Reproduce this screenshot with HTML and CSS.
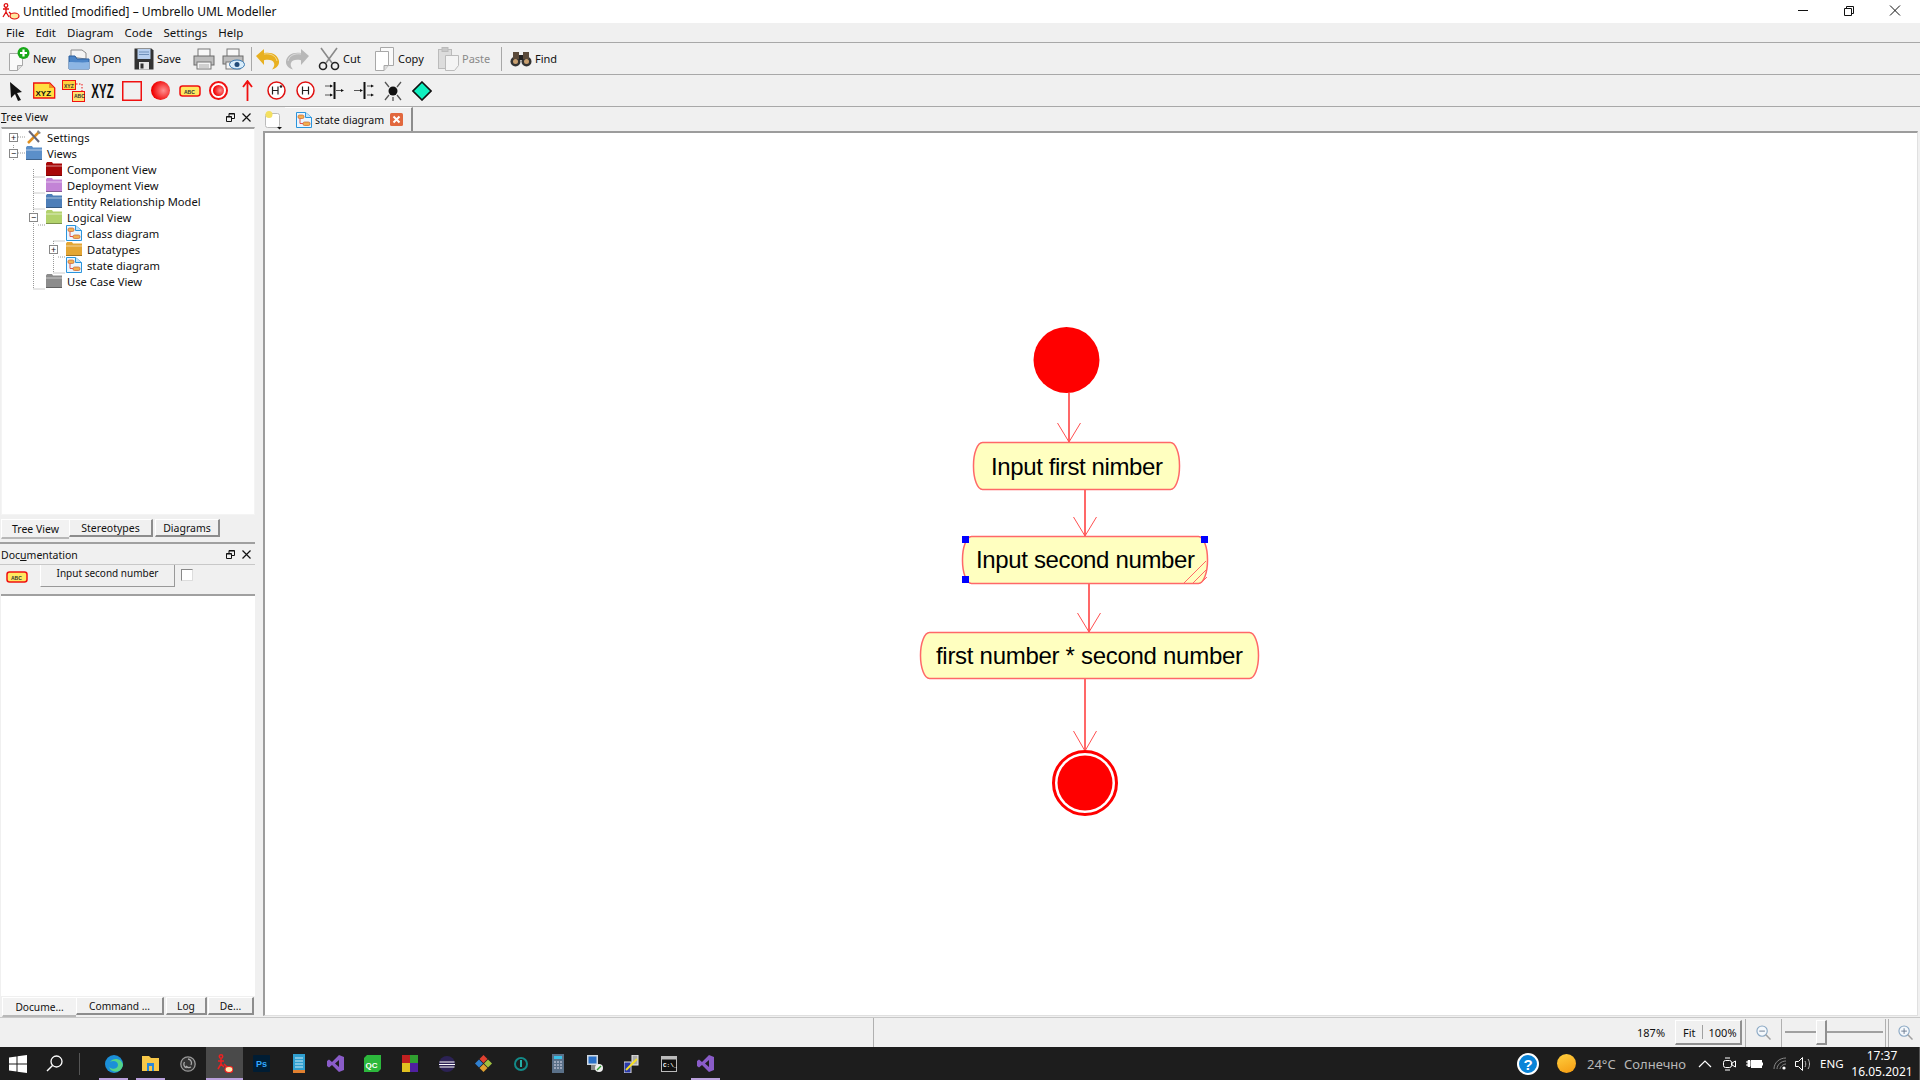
FILE: index.html
```html
<!DOCTYPE html>
<html lang="en">
<head>
  <meta charset="UTF-8">
  <title>Untitled [modified] – Umbrello UML Modeller</title>
  <link rel="stylesheet" href="styles.css">
</head>
<body>

<svg class="sprite" width="0" height="0">
  <symbol id="umbrello" viewBox="0 0 18 18">
    <g fill="none" stroke="#e01010" stroke-width="1.3"><circle cx="4" cy="2.5" r="1.8"/><path d="M4 4v5M1 6h6M4 9l-3 5M4 9l3 5M7 9l3 3"/></g>
    <ellipse cx="12.5" cy="13" rx="4.5" ry="3" fill="#ffe9a0" stroke="#e01010" stroke-width="1.2"/>
  </symbol>
  <symbol id="folder" viewBox="0 0 16 16">
    <path d="M0 2.5 1 1h5l1 1.5h9V15H0z" fill="currentColor"/>
    <path d="M0 5h16" stroke="#fff" stroke-opacity=".55"/>
    <path d="M0 14.5h16" stroke="#000" stroke-opacity=".3"/>
  </symbol>
  <symbol id="diagram" viewBox="0 0 16 16">
    <path d="M.5.5h9l6 5v10H.5z" fill="#eaf6ff" stroke="#2a94dc"/>
    <path d="M9.500.5v5h6" fill="#bfe3fb" stroke="#2a94dc"/>
    <rect x="2" y="3" width="6" height="3.500" rx="1.500" fill="#f2b050" stroke="#c86030" stroke-width=".7"/>
    <rect x="7" y="10" width="7" height="3.500" rx="1.500" fill="#f2b050" stroke="#c86030" stroke-width=".7"/>
    <path d="M4 6.500v5h3" fill="none" stroke="#e05050"/>
  </symbol>
  <symbol id="i-new" viewBox="0 0 22 24">
    <path d="M1.500 6.500h13v12l-5 5h-8z" fill="#fafafa" stroke="#a8a8a8"/><path d="M14.500 18.500h-5v5" fill="#ddd" stroke="#a8a8a8"/>
    <circle cx="15.500" cy="6" r="6" fill="#18a818"/><path d="M15.500 2.500v7M12 6h7" stroke="#fff" stroke-width="2.200"/>
  </symbol>
  <symbol id="i-open" viewBox="0 0 22 24">
    <path d="M3 10V3h11l4 3v6z" fill="#f4f4f4" stroke="#8a8a8a"/>
    <path d="M1 9h6l2 3h12v10H1z" fill="#4d86c8" stroke="#2b5f9e"/><path d="M1 15c6 0 14 1 20 0v7H1z" fill="#8db6e4"/>
  </symbol>
  <symbol id="i-save" viewBox="0 0 20 22">
    <path d="M.5.500h17l2 2v19H.500z" fill="#333"/><rect x="3.500" y="1" width="13" height="10" fill="#b8cfee"/>
    <path d="M5 4h10M5 6.500h10" stroke="#6f8fb8"/><rect x="5" y="14" width="10" height="7.500" fill="#e8e8e8"/><rect x="6.500" y="15.500" width="3" height="5" fill="#333"/>
  </symbol>
  <symbol id="i-print" viewBox="0 0 22 22">
    <rect x="5" y="1" width="12" height="8" fill="#f8f8f8" stroke="#777"/><rect x="1" y="8" width="20" height="9" fill="#bdbdbd" stroke="#6a6a6a"/>
    <rect x="4" y="14" width="14" height="7" fill="#f4f4f4" stroke="#777"/><path d="M6 17h10M6 19h10" stroke="#aaa"/>
  </symbol>
  <symbol id="i-preview" viewBox="0 0 23 22">
    <rect x="5" y="1" width="12" height="8" fill="#f8f8f8" stroke="#777"/><rect x="1" y="8" width="20" height="8" fill="#bdbdbd" stroke="#6a6a6a"/>
    <rect x="4" y="14" width="14" height="7" fill="#f4f4f4" stroke="#777"/>
    <ellipse cx="15" cy="16.500" rx="7.500" ry="4.500" fill="#d8ecfa" stroke="#3878b0"/><circle cx="15" cy="16.500" r="2.500" fill="#204a78"/>
  </symbol>
  <symbol id="i-undo" viewBox="0 0 23 22">
    <path d="M0 8 8 1v4c8-1.500 14 2 15 8 .5 4-2.500 7.500-7 8.500 1.800-2 2.800-4.500 2-6.500-1-3-5-4-10-2.800V17z" fill="currentColor"/>
    <path d="M8 6c7-1 12 2 13 7" fill="none" stroke="#fff" stroke-opacity=".5"/>
  </symbol>
  <symbol id="i-cut" viewBox="0 0 22 24">
    <path d="M3 1l11 15M19 1 8 16" stroke="#8a8a8a" stroke-width="1.600" fill="none"/>
    <circle cx="5" cy="19" r="3.500" fill="none" stroke="#222" stroke-width="1.600"/><circle cx="17" cy="19" r="3.500" fill="none" stroke="#222" stroke-width="1.600"/>
  </symbol>
  <symbol id="i-copy" viewBox="0 0 20 24">
    <path d="M5.500.5h13v18h-13z" fill="#fafafa" stroke="#a8a8a8"/><path d="M.5 4.500h13v14l-4.500 5H.500z" fill="#fff" stroke="#a8a8a8"/><path d="M13.500 18.500h-4.500v5" fill="#ddd" stroke="#a8a8a8"/>
  </symbol>
  <symbol id="i-paste" viewBox="0 0 21 24">
    <rect x=".5" y="2.500" width="13" height="19" fill="#dcdcdc" stroke="#bbb"/><rect x="4" y=".5" width="6" height="4" fill="#c8c8c8" stroke="#bbb"/>
    <path d="M7.500 8.500h13v10l-4 5h-9z" fill="#f4f4f4" stroke="#bbb"/>
  </symbol>
  <symbol id="i-find" viewBox="0 0 22 18">
    <circle cx="5.500" cy="11.500" r="5" fill="#333"/><circle cx="16.500" cy="11.500" r="5" fill="#333"/><rect x="3" y="2" width="6" height="7" fill="#5a4a3a"/><rect x="13" y="2" width="6" height="7" fill="#5a4a3a"/>
    <rect x="9" y="5" width="4" height="5" fill="#222"/><circle cx="5.500" cy="11.500" r="2.500" fill="#c9a070"/><circle cx="16.500" cy="11.500" r="2.500" fill="#c9a070"/>
  </symbol>
  <symbol id="i-abc" viewBox="0 0 22 12">
    <rect x="1" y="1" width="20" height="10" rx="2.500" fill="#ffe860" stroke="#f01010" stroke-width="1.500"/>
  </symbol>
  <symbol id="i-zoom" viewBox="0 0 16 16">
    <circle cx="6.500" cy="6.500" r="5.500" fill="#f4f8fc" stroke="#8aa8c4" stroke-width="1.200"/><path d="M10.500 10.500l5 5" stroke="#a0a0a0" stroke-width="1.600"/><path d="M3.500 6.500h6" stroke="#6a7a90"/>
  </symbol>
  <symbol id="i-zoom-in" viewBox="0 0 16 16">
    <circle cx="6.500" cy="6.500" r="5.500" fill="#f4f8fc" stroke="#8aa8c4" stroke-width="1.200"/><path d="M10.500 10.500l5 5" stroke="#a0a0a0" stroke-width="1.600"/><path d="M3.500 6.500h6M6.500 3.500v6" stroke="#6a7a90"/>
  </symbol>
  <symbol id="i-float" viewBox="0 0 9 9">
    <path d="M.5 3.500h5v5h-5zM3 3V.5h5.500v5H6" fill="none" stroke="#111"/><path d="M.5 4h5M3 1h5.500" stroke="#111"/>
  </symbol>
  <symbol id="i-close" viewBox="0 0 9 9">
    <path d="M.5.500l8 8M8.500.500l-8 8" stroke="#111" stroke-width="1.200"/>
  </symbol>
</svg>

<header class="titlebar">
  <svg class="app-icon"><use href="#umbrello"/></svg>
  <span class="title-text">Untitled [modified] – Umbrello UML Modeller</span>
  <div class="win-buttons">
    <svg width="46" height="23" viewBox="0 0 46 23"><path d="M18 10.500h10" stroke="#111"/></svg>
    <svg width="46" height="23" viewBox="0 0 46 23"><path d="M18.500 8.500h7v7h-7zM20.500 8.500v-2h7v7h-2" fill="none" stroke="#111"/></svg>
    <svg width="46" height="23" viewBox="0 0 46 23"><path d="M18 5.500l10 10M28 5.500l-10 10" stroke="#111"/></svg>
  </div>
</header>

<nav class="menubar">
  <span>File</span><span>Edit</span><span>Diagram</span><span>Code</span><span>Settings</span><span>Help</span>
</nav>

<div class="toolbar main-tools">
  <span class="tool tool-new"><svg width="22" height="24"><use href="#i-new"/></svg>New</span>
  <span class="tool tool-open"><svg width="22" height="24"><use href="#i-open"/></svg>Open</span>
  <span class="tool tool-save"><svg width="20" height="22"><use href="#i-save"/></svg>Save</span>
  <span class="tool tool-print"><svg width="22" height="22"><use href="#i-print"/></svg></span>
  <span class="tool tool-preview"><svg width="23" height="22"><use href="#i-preview"/></svg></span>
  <span class="tool-sep"></span>
  <span class="tool tool-undo undo"><svg width="23" height="22"><use href="#i-undo"/></svg></span>
  <span class="tool tool-redo redo"><svg width="23" height="22"><use href="#i-undo"/></svg></span>
  <span class="tool tool-cut"><svg width="22" height="24"><use href="#i-cut"/></svg>Cut</span>
  <span class="tool tool-copy"><svg width="20" height="24"><use href="#i-copy"/></svg>Copy</span>
  <span class="tool tool-paste disabled"><svg width="21" height="24"><use href="#i-paste"/></svg>Paste</span>
  <span class="tool-sep sep-find"></span>
  <span class="tool tool-find"><svg width="22" height="18"><use href="#i-find"/></svg>Find</span>
</div>

<div class="toolbar uml-tools">
  <span class="uml"><svg width="14" height="20" viewBox="0 0 14 20"><path d="M1 1l12 10-5 1 4 7-3 1-3-7-4 4z" fill="#111"/></svg></span>
  <span class="uml"><svg width="23" height="17" viewBox="0 0 23 17"><path d="M.7 1h16l5 5v10H.700z" fill="#ffe040" stroke="#f01010" stroke-width="1.300"/><path d="M16 1l5 5h-5z" fill="#f09020"/><text class="xyz-small" x="2.500" y="14">XYZ</text></svg></span>
  <span class="uml"><svg width="23" height="22" viewBox="0 0 23 22"><rect x=".5" y=".5" width="13" height="9" fill="#ffd040" stroke="#f01010"/><rect x="10.500" y="11.500" width="12" height="10" fill="#ffe070" stroke="#f01010"/><path d="M14 4h6v7" fill="none" stroke="#f01010" stroke-dasharray="1.500 1.500"/><text class="xyz-tiny" x="2" y="7.500">XYZ</text><text class="xyz-tiny" x="12" y="17.500">ABC</text></svg></span>
  <span class="uml uml-xyz">XYZ</span>
  <span class="uml"><svg width="20" height="20" viewBox="0 0 20 20"><rect x=".75" y=".75" width="18.500" height="18.500" fill="none" stroke="#f01010" stroke-width="1.500"/></svg></span>
  <span class="uml"><svg width="19" height="19" viewBox="0 0 19 19"><defs><radialGradient id="ball" cx=".65" cy=".5" r=".6"><stop offset="0" stop-color="#ff9090"/><stop offset="1" stop-color="#f00000"/></radialGradient></defs><circle cx="9.500" cy="9.500" r="9.500" fill="url(#ball)"/></svg></span>
  <span class="uml"><svg width="22" height="12" viewBox="0 0 22 12"><use href="#i-abc"/><text class="xyz-tiny" x="5" y="8.500">ABC</text></svg></span>
  <span class="uml"><svg width="19" height="19" viewBox="0 0 19 19"><circle cx="9.500" cy="9.500" r="8.500" fill="#fff" stroke="#f01010" stroke-width="2"/><circle cx="9.500" cy="9.500" r="5.500" fill="url(#ball)"/></svg></span>
  <span class="uml"><svg width="11" height="21" viewBox="0 0 11 21"><path d="M5.500 21V2M1 7l4.500-6L10 7" fill="none" stroke="#f01010" stroke-width="1.800"/></svg></span>
  <span class="uml"><svg width="19" height="19" viewBox="0 0 19 19"><circle cx="9.500" cy="9.500" r="8.500" fill="#fff" stroke="#e01010" stroke-width="1.500"/><path d="M5.500 5.500v8M11 5.500v8M5.500 9.500H11" stroke="#222" stroke-width="1.200"/><circle cx="14" cy="5.500" r="1.300" fill="#222"/></svg></span>
  <span class="uml"><svg width="19" height="19" viewBox="0 0 19 19"><circle cx="9.500" cy="9.500" r="8.500" fill="#fff" stroke="#e01010" stroke-width="1.500"/><path d="M6.500 5.500v8M12.500 5.500v8M6.500 9.500h6" stroke="#222" stroke-width="1.200"/></svg></span>
  <span class="uml"><svg width="20" height="17" viewBox="0 0 20 17"><path d="M9.500 0v17" stroke="#111" stroke-width="2"/><path d="M0 4h7M0 13h7M11 8.500h6" stroke="#555"/><path d="M5 2.500 8 4 5 5.500zM5 11.500 8 13l-3 1.500zM16 7l3 1.500-3 1.500z" fill="#111"/></svg></span>
  <span class="uml"><svg width="20" height="17" viewBox="0 0 20 17"><path d="M10.500 0v17" stroke="#111" stroke-width="2"/><path d="M0 8.500h7M13 4h5M13 13h5" stroke="#555"/><path d="M6 7l3 1.500L6 10zM17 2.500 20 4l-3 1.500zM17 11.500l3 1.500-3 1.500z" fill="#111"/></svg></span>
  <span class="uml"><svg width="20" height="20" viewBox="0 0 20 20"><circle cx="10" cy="10" r="4.500" fill="#111"/><path d="M2 1l4 5M18 1l-4 5M2 19l4-5M18 19l-4-5M10 16v4" stroke="#555" stroke-width="1.300"/></svg></span>
  <span class="uml"><svg width="20" height="20" viewBox="0 0 20 20"><path d="M10 1l9 9-9 9-9-9z" fill="#10f0c0" stroke="#111" stroke-width="1.600"/></svg></span>
</div>

<div class="workspace">
  <aside class="dock">
    <div class="dock-title">
      <span><u>T</u>ree View</span>
      <span class="dock-btns">
        <svg width="9" height="9"><use href="#i-float"/></svg>
        <svg width="9" height="9"><use href="#i-close"/></svg>
      </span>
    </div>
    <div class="tree-box">
      <svg class="tree-lines" width="100" height="190" viewBox="0 0 100 190">
        <path d="M11.500 16v16M31.500 40v120M31.500 48h12M31.500 64h12M31.500 80h12M31.500 160h12M51.500 112v32M51.500 112h12M51.500 144h12M16 8h8M16 24h8M36 96h8M56 128h8" fill="none" stroke="#999" stroke-dasharray="1 1"/>
      </svg>
      <ul class="tree">
        <li class="lvl0"><span class="exp">+</span><svg class="tree-icon" viewBox="0 0 16 16"><path d="M2 14 13 3" stroke="#e09020" stroke-width="2.500"/><path d="M3 2l10 11" stroke="#667" stroke-width="2"/><path d="M12 1l3 3-2 1-2-2z" fill="#888"/></svg>Settings</li>
        <li class="lvl0"><span class="exp">−</span><svg class="tree-icon fld-blue"><use href="#folder"/></svg>Views</li>
        <li class="lvl1"><span class="noexp"></span><svg class="tree-icon fld-red"><use href="#folder"/></svg>Component View</li>
        <li class="lvl1"><span class="noexp"></span><svg class="tree-icon fld-purple"><use href="#folder"/></svg>Deployment View</li>
        <li class="lvl1"><span class="noexp"></span><svg class="tree-icon fld-navy"><use href="#folder"/></svg>Entity Relationship Model</li>
        <li class="lvl1"><span class="exp">−</span><svg class="tree-icon fld-green"><use href="#folder"/></svg>Logical View</li>
        <li class="lvl2"><span class="noexp"></span><svg class="tree-icon"><use href="#diagram"/></svg>class diagram</li>
        <li class="lvl2"><span class="exp">+</span><svg class="tree-icon fld-orange"><use href="#folder"/></svg>Datatypes</li>
        <li class="lvl2"><span class="noexp"></span><svg class="tree-icon"><use href="#diagram"/></svg>state diagram</li>
        <li class="lvl1"><span class="noexp"></span><svg class="tree-icon fld-grey"><use href="#folder"/></svg>Use Case View</li>
      </ul>
    </div>
    <div class="dock-tabs tabs-top">
      <span class="dtab active t-tree">Tree View</span>
      <span class="dtab t-stereo">Stereotypes</span>
      <span class="dtab t-diag">Diagrams</span>
    </div>
    <div class="dock-title doc-title">
      <span>Doc<u>u</u>mentation</span>
      <span class="dock-btns">
        <svg width="9" height="9"><use href="#i-float"/></svg>
        <svg width="9" height="9"><use href="#i-close"/></svg>
      </span>
    </div>
    <div class="doc-head">
      <svg class="doc-icon" width="22" height="12" viewBox="0 0 22 12"><use href="#i-abc"/><text class="xyz-tiny" x="5" y="8.500">ABC</text></svg>
      <span class="doc-name">Input second number</span>
      <span class="doc-check"></span>
    </div>
    <div class="doc-box"></div>
    <div class="dock-tabs tabs-bottom">
      <span class="dtab active t-docu">Docume...</span>
      <span class="dtab t-cmd">Command ...</span>
      <span class="dtab t-log">Log</span>
      <span class="dtab t-de">De...</span>
    </div>
  </aside>

  <section class="editor">
    <div class="tabbar">
      <span class="corner"><svg width="18" height="20" viewBox="0 0 18 20"><rect x=".5" y="3.500" width="14" height="14" rx="2" fill="#fff" stroke="#bbb"/><circle cx="4" cy="4.500" r="3.500" fill="#f4e060"/><path d="M12 17h5l-2.500 2.500z" fill="#111"/></svg></span>
      <span class="doc-tab">
        <svg class="tree-icon"><use href="#diagram"/></svg>state diagram
        <svg class="tab-close" width="13" height="13" viewBox="0 0 13 13"><rect width="13" height="13" rx="1.500" fill="#e2683e"/><path d="M3.500 3.500l6 6M9.500 3.500l-6 6" stroke="#fff" stroke-width="2"/></svg>
      </span>
    </div>
    <div class="canvas">
      <svg class="diagram" width="1652" height="881" viewBox="265 133 1652 881">
        <circle class="solid" cx="1066.500" cy="360" r="33"/>

        <path class="edge" d="M1069 393v49"/>
        <path class="head" d="M1057.500 423l11.500 19 11.500-19"/>
        <rect class="state" x="973.500" y="442.500" width="206" height="47" rx="9" ry="23"/>
        <text class="state-text" x="991" y="475" textLength="172">Input first nimber</text>

        <path class="edge" d="M1085 490v46"/>
        <path class="head" d="M1073.500 517l11.500 19 11.500-19"/>
        <rect class="state" x="962.500" y="536.500" width="245" height="47" rx="9" ry="23"/>
        <text class="state-text" x="976" y="568" textLength="219">Input second number</text>
        <path class="hatch" d="M1184 583l22-22M1193 583l14-14M1201 583l6-6"/>
        <rect class="handle" x="962" y="536" width="7" height="7"/>
        <rect class="handle" x="1201" y="536" width="7" height="7"/>
        <rect class="handle" x="962" y="576" width="7" height="7"/>

        <path class="edge" d="M1089 584v48"/>
        <path class="head" d="M1077.500 613l11.500 19 11.500-19"/>
        <rect class="state" x="920.500" y="632.500" width="338" height="46" rx="9" ry="23"/>
        <text class="state-text" x="936" y="664" textLength="307">first number * second number</text>

        <path class="edge" d="M1085 679v72"/>
        <path class="head" d="M1073.500 731l11.500 20 11.500-20"/>
        <circle class="end-ring" cx="1085" cy="783" r="31.500"/>
        <circle class="solid" cx="1085" cy="783" r="27.500"/>
      </svg>
    </div>
  </section>
</div>

<div class="statusbar">
  <div class="status-msg"></div>
  <span class="zoom-pct">187%</span>
  <span class="zoom-btns"><span>Fit</span><i></i><span>100%</span></span>
  <span class="zoom-cell zoom-out"><svg width="15" height="15"><use href="#i-zoom"/></svg></span>
  <span class="zoom-slider"><b></b></span>
  <span class="zoom-cell zoom-in"><svg width="15" height="15"><use href="#i-zoom-in"/></svg></span>
</div>

<footer class="taskbar">
  <svg class="start" width="18" height="18" viewBox="0 0 18 18"><path d="M0 2.500 7.500 1.500v7H0zM8.500 1.300 18 0v8.500H8.500zM0 9.500h7.500v7L0 15.500zM8.500 9.500H18V18l-9.500-1.300z" fill="#fff"/></svg>
  <svg class="search" width="17" height="17" viewBox="0 0 17 17"><circle cx="10.500" cy="6.500" r="5.500" fill="none" stroke="#fff" stroke-width="1.300"/><path d="M6.500 10.500 1 16" stroke="#fff" stroke-width="1.500"/></svg>
  <span class="task-sep"></span>
  <div class="task-apps">
    <span class="app on"><svg width="18" height="18" viewBox="0 0 18 18"><circle cx="9" cy="9" r="9" fill="#1b8fd8"/><path d="M18 10c-1-7-10-8-13-3 3-2 8-1 8 3 0 4-6 5-9 2 2 6 12 7 14-2z" fill="#54d48a"/></svg></span>
    <span class="app on"><svg width="17" height="15" viewBox="0 0 17 15"><path d="M0 0h7l2 2h8v13H0z" fill="#f8c848"/><rect x="5" y="7" width="7" height="8" fill="#2a88d8"/><rect x="7" y="10" width="3" height="5" fill="#f8c848"/></svg></span>
    <span class="app"><svg width="16" height="16" viewBox="0 0 16 16"><circle cx="8" cy="8" r="7.200" fill="#333" stroke="#999" stroke-width="1.300"/><path d="M8 3a4 4 0 0 1 3 6M4.500 6a4 4 0 0 0 2 6M11 11a4 4 0 0 1-5-1" fill="none" stroke="#aaa" stroke-width="1.300"/></svg></span>
    <span class="app on active"><svg width="16" height="20" viewBox="0 0 16 20"><g fill="none" stroke="#f02020" stroke-width="1.500"><circle cx="4" cy="2.500" r="1.700"/><path d="M4 4.500v6M1 7h6M4 10l-3 5M4 10l3 3M7 10l3 3"/></g><ellipse cx="12" cy="15.500" rx="4" ry="3" fill="#ffe8b0" stroke="#f02020" stroke-width="1.200"/></svg></span>
    <span class="app"><svg width="17" height="17" viewBox="0 0 17 17"><rect width="17" height="17" rx="1" fill="#001d34"/><text class="ps" x="3" y="12">Ps</text></svg></span>
    <span class="app"><svg width="12" height="19" viewBox="0 0 12 19"><rect width="12" height="19" fill="#2f9fd0"/><path d="M2 4h8M2 7h8M2 10h8M2 13h8" stroke="#cdeaf6"/><rect y="16" width="12" height="3" fill="#e08030"/></svg></span>
    <span class="app"><svg width="17" height="17" viewBox="0 0 17 17"><path d="M12 0l5 2v13l-5 2L5 10l-3 2.500L0 11V6l2-1.500L5 7zM12 5 8 8.500l4 3.500z" fill="#8a5cc8"/></svg></span>
    <span class="app"><svg width="17" height="17" viewBox="0 0 17 17"><path d="M3 0h14v14l-3 3H0V3z" fill="#2cb83c"/><text class="qc" x="1.500" y="12.500">QC</text></svg></span>
    <span class="app"><svg width="16" height="17" viewBox="0 0 16 17"><rect width="8" height="8" fill="#c02020"/><rect x="8" width="8" height="8" fill="#30a030"/><rect y="8" width="8" height="9" fill="#e0c020"/><rect x="8" y="8" width="8" height="9" fill="#5020a0"/></svg></span>
    <span class="app"><svg width="16" height="16" viewBox="0 0 16 16"><circle cx="8" cy="8" r="8" fill="#2c2255"/><path d="M.5 6h15M0 8.500h16M.5 11h15" stroke="#fff" stroke-width="1"/></svg></span>
    <span class="app"><svg width="17" height="17" viewBox="0 0 17 17"><path d="M8.500 0l4 4-4 4-4-4z" fill="#e04030"/><path d="M13 4.500l4 4-4 4-4-4z" fill="#a0c040"/><path d="M4 4.500l4 4-4 4-4-4z" fill="#3080d0"/><path d="M8.500 9l4 4-4 4-4-4z" fill="#e0a030"/></svg></span>
    <span class="app"><svg width="14" height="14" viewBox="0 0 14 14"><circle cx="7" cy="7" r="6" fill="none" stroke="#138a88" stroke-width="2"/><path d="M7 3v7" stroke="#26b0a8" stroke-width="2"/></svg></span>
    <span class="app"><svg width="12" height="19" viewBox="0 0 12 19"><rect width="12" height="19" fill="#5a7088"/><rect x="2" y="2" width="8" height="3" fill="#3ac0e8"/><path d="M2 8h2M5 8h2M8 8h2M2 11h2M5 11h2M8 11h2M2 14h2M5 14h2M8 14h2" stroke="#dde"/></svg></span>
    <span class="app"><svg width="16" height="17" viewBox="0 0 16 17"><rect width="11" height="10" fill="#d0d8e0"/><rect x="1.500" y="1.500" width="8" height="7" fill="#2a70c8"/><rect x="4" y="10" width="5" height="5" fill="#888"/><circle cx="12" cy="13" r="4" fill="#eee"/><path d="M10 15l4-4" stroke="#30a030" stroke-width="1.500"/></svg></span>
    <span class="app"><svg width="15" height="18" viewBox="0 0 15 18"><rect x="0" y="7" width="7" height="11" fill="#2a3aa8" stroke="#ddd"/><rect x="8" y="0" width="6" height="10" fill="#aaa" stroke="#eee"/><path d="M2 15 13 4" stroke="#f8e020" stroke-width="1.800"/></svg></span>
    <span class="app"><svg width="16" height="16" viewBox="0 0 16 16"><rect x=".5" y=".5" width="15" height="15" fill="#111" stroke="#bbb"/><rect x="1" y="1" width="14" height="2.500" fill="#bbb"/><text class="cmd" x="2" y="11">C:\_</text></svg></span>
    <span class="app on"><svg width="17" height="17" viewBox="0 0 17 17"><path d="M12 0l5 2v13l-5 2L5 10l-3 2.500L0 11V6l2-1.500L5 7zM12 5 8 8.500l4 3.500z" fill="#8a5cc8"/></svg></span>
  </div>
  <div class="tray">
    <svg class="tray-help" width="22" height="22" viewBox="0 0 22 22"><circle cx="11" cy="11" r="10" fill="#0a84d8" stroke="#fff" stroke-width="2"/><text class="help-q" x="11" y="16.500">?</text></svg>
    <span class="sun"></span>
    <span class="weather temp">24°C</span>
    <span class="weather cond">Солнечно</span>
    <svg class="tray-i chevron" width="14" height="8" viewBox="0 0 14 8"><path d="M1 7l6-6 6 6" fill="none" stroke="#fff" stroke-width="1.200"/></svg>
    <svg class="tray-i cam" width="13" height="16" viewBox="0 0 13 16"><rect x=".5" y="4.500" width="8" height="7" rx="2" fill="none" stroke="#fff"/><path d="M9 7l3.500-2v6L9 9zM2 2h5M2 14h5" fill="none" stroke="#fff"/></svg>
    <svg class="tray-i batt" width="17" height="10" viewBox="0 0 17 10"><path d="M0 3h2M0 6h2M2 1.500h2v6H2z" stroke="#fff" fill="#fff"/><rect x="5.500" y="1.500" width="10" height="7" fill="#fff" stroke="#fff"/><rect x="16" y="3.500" width="1" height="3" fill="#fff"/></svg>
    <svg class="tray-i wifi" width="14" height="13" viewBox="0 0 14 13"><path d="M1 12C1 6 6 1 13 1M4 12c0-4 4-8 9-8M7 12c0-2 3-5 6-5" fill="none" stroke="#888"/><circle cx="11" cy="11" r="1.600" fill="#fff"/></svg>
    <svg class="tray-i vol" width="17" height="14" viewBox="0 0 17 14"><path d="M.5 4.500h3l4-4v13l-4-4h-3z" fill="none" stroke="#fff"/><path d="M10 4c1 2 1 4 0 6M13 2c2 3 2 7 0 10" fill="none" stroke="#bbb"/></svg>
    <span class="lang">ENG</span>
    <span class="clock">17:37<br>16.05.2021</span>
  </div>
</footer>

</body>
</html>
```

FILE: styles.css
```css
* { box-sizing: border-box; }
html, body { margin: 0; padding: 0; }
body { width: 1920px; height: 1080px; overflow: hidden; display: flex; flex-direction: column; background-color: #f0f0f0; color: #111; font-family: "Noto Sans", "Liberation Sans", sans-serif; font-size: 11.5px; }
.sprite { position: absolute; }

.titlebar { height: 23px; background-color: #fff; display: flex; align-items: center; padding-left: 2px; font-size: 12px; }
.app-icon { width: 18px; height: 18px; margin-right: 3px; }
.win-buttons { margin-left: auto; display: flex; padding-right: 2px; }
.win-buttons svg { display: block; }

.menubar { height: 20px; display: flex; align-items: center; padding-left: 6px; border-bottom: 1px solid #a8a8a8; font-size: 11.5px; }
.menubar span { margin-right: 11px; }

.toolbar { height: 32px; display: flex; align-items: center; border-bottom: 1px solid #a8a8a8; }
.tool { display: flex; align-items: center; font-size: 11px; flex: none; }
.tool svg { margin-right: 3px; }
.main-tools { padding-left: 8px; }
.tool-new { width: 60px; }
.tool-open { width: 66px; }
.tool-save { width: 59px; }
.tool-print { width: 29px; }
.tool-preview { width: 29px; }
.tool-sep { width: 1px; height: 24px; background-color: #a8a8a8; margin-right: 4px; flex: none; }
.tool-undo { width: 30px; }
.tool-redo { width: 32px; }
.tool-cut { width: 57px; }
.tool-copy { width: 63px; }
.tool-paste { width: 63px; }
.sep-find { margin-right: 8px; }
.undo { color: #e8b020; }
.redo { color: #b8b8b8; }
.redo svg { transform: scaleX(-1); }
.disabled { color: #8a8a8a; }

.uml-tools { padding-left: 1px; }
.uml { width: 29.05px; display: flex; justify-content: center; align-items: center; flex: none; }
.uml-xyz { font-family: "Liberation Sans", sans-serif; font-size: 21px; transform: scaleX(.55); color: #111; font-weight: 700; }
.xyz-small { font: 700 8px "Liberation Sans", sans-serif; fill: #111; }
.xyz-tiny { font: 700 5px "Liberation Sans", sans-serif; fill: #333; }

.workspace { flex: 1; display: flex; min-height: 0; }
.dock { width: 255px; margin-right: 8px; display: flex; flex-direction: column; }
.dock-title { height: 20px; padding: 0 4px 0 1px; display: flex; justify-content: space-between; align-items: center; font-size: 10.5px; }
.doc-title { padding-top: 1px; }
.dock-btns { display: flex; gap: 7px; align-items: center; }
.tree-box { height: 388px; position: relative; background-color: #fff; border: 1px solid #f4f4f4; border-top: 2px solid #a0a0a0; margin-left: 1px; }
.tree-lines { position: absolute; left: 0; top: 0; }
.tree { list-style: none; margin: 0; padding: 0; position: relative; }
.tree li { height: 16px; display: flex; align-items: center; white-space: nowrap; font-size: 11.2px; }
.lvl0 { padding-left: 7px; }
.lvl1 { padding-left: 27px; }
.lvl2 { padding-left: 47px; }
.exp { width: 9px; height: 9px; border: 1px solid #888; background-color: #fff; display: flex; align-items: center; justify-content: center; font-size: 9px; line-height: 1; flex: none; margin-right: 8px; }
.noexp { width: 9px; margin-right: 8px; flex: none; }
.tree-icon { width: 16px; height: 16px; margin-right: 5px; flex: none; }
.fld-blue { color: #5b8fc9; }
.fld-red { color: #a80808; }
.fld-purple { color: #c384d6; }
.fld-navy { color: #4d7eb8; }
.fld-green { color: #b2d26c; }
.fld-orange { color: #e4a634; }
.fld-grey { color: #8c8c8c; }

.dock-tabs { display: flex; align-items: flex-start; font-size: 10.5px; }
.tabs-top { height: 29px; padding: 4px 0 0 1px; border-bottom: 2px solid #a0a0a0; }
.tabs-bottom { height: 21px; padding: 1px 0 0 2px; font-size: 10.2px; }
.dtab { height: 18px; display: flex; align-items: center; justify-content: center; background-color: #f0f0f0; border-right: 2px solid #8c8c8c; border-bottom: 2px solid #8c8c8c; border-top: 1px solid #fff; border-left: 1px solid #fff; flex: none; }
.dtab.active { height: 20px; border-right: none; border-bottom: 2px solid #b8b8b8; background-color: #f2f2f2; padding-top: 1px; }
.t-tree { width: 68px; }
.t-stereo { width: 84px; }
.t-diag { width: 65px; margin-left: 2px; }
.t-docu { width: 74px; }
.t-cmd { width: 88px; }
.t-log { width: 41px; margin-left: 2px; }
.t-de { width: 46px; margin-left: 1px; }

.doc-head { height: 30px; display: flex; align-items: flex-start; border-top: 1px solid #c8c8c8; padding-left: 6px; font-size: 10px; }
.doc-icon { margin-top: 6px; flex: none; }
.doc-name { width: 135px; height: 22px; margin: 0 6px 0 12px; padding-top: 1px; text-align: center; border-right: 1px solid #999; border-bottom: 1px solid #999; border-left: 1px solid #fff; }
.doc-check { width: 12px; height: 12px; margin-top: 4px; background-color: #fff; border: 1px solid #888; border-right-color: #ddd; border-bottom-color: #ddd; }
.doc-box { flex: 1; background-color: #fff; border-top: 2px solid #a0a0a0; margin-left: 1px; }

.editor { flex: 1; display: flex; flex-direction: column; }
.tabbar { height: 24px; display: flex; align-items: flex-end; }
.corner { width: 21px; height: 23px; flex: none; display: flex; align-items: center; justify-content: center; }
.doc-tab { height: 24px; width: 128px; margin-left: 1px; padding-left: 11px; display: flex; align-items: center; border-right: 2px solid #8c8c8c; border-top: 1px solid #fff; font-size: 10.6px; white-space: nowrap; }
.doc-tab .tree-icon { margin-right: 3px; }
.tab-close { margin-left: 6px; flex: none; }
.canvas { height: 885px; margin-right: 2px; background-color: #fff; border-top: 2px solid #9c9c9c; border-left: 2px solid #9c9c9c; border-right: 1px solid #e0e0e0; border-bottom: 1px solid #e0e0e0; position: relative; overflow: hidden; }
.diagram { position: absolute; left: 0; top: 0; }

.solid { fill: #ff0000; }
.end-ring { fill: #fff; stroke: #ff0000; stroke-width: 3; }
.edge { stroke: #ff6868; stroke-width: 2; fill: none; }
.head { stroke: #ff5050; stroke-width: 1; fill: none; }
.state { fill: #ffffc0; stroke: #ff6868; stroke-width: 1.5; }
.hatch { stroke: #ff6868; stroke-width: 1; fill: none; }
.handle { fill: #0000ff; }
.state-text { font-family: "Liberation Sans", Arial, sans-serif; font-size: 24px; fill: #000; }

.statusbar { height: 30px; display: flex; align-items: center; border-top: 1px solid #c8c8c8; font-size: 11px; padding-left: 873px; }
.status-msg { width: 764px; height: 100%; border-left: 1px solid #b0b0b0; flex: none; }
.zoom-pct { width: 38px; flex: none; }
.zoom-btns { width: 67px; height: 25px; flex: none; display: flex; align-items: center; padding-left: 7px; border-right: 2px solid #909090; border-bottom: 2px solid #909090; border-top: 1px solid #fff; border-left: 1px solid #fff; }
.zoom-btns i { width: 1px; height: 14px; background-color: #a0a0a0; margin: 0 6px; }
.zoom-cell { height: 28px; display: flex; align-items: center; flex: none; border-left: 1px solid #b0b0b0; }
.zoom-out { width: 36px; margin-left: 3px; padding-left: 10px; }
.zoom-slider { width: 105px; height: 28px; flex: none; position: relative; border-left: 1px solid #b0b0b0; border-right: 1px solid #b0b0b0; }
.zoom-slider::before { content: ""; position: absolute; left: 3px; right: 2px; top: 12px; height: 2px; background-color: #a0a0a0; }
.zoom-slider b { position: absolute; left: 34px; top: 1px; width: 11px; height: 25px; background-color: #f0f0f0; border-right: 2px solid #909090; border-bottom: 2px solid #909090; border-left: 1px solid #fff; border-top: 1px solid #fff; }
.zoom-in { width: 30px; margin-left: 2px; padding-left: 9px; }

.taskbar { height: 33px; background-color: #1d1d1d; display: flex; align-items: center; color: #fff; font-size: 12px; }
.start { margin-left: 9px; flex: none; }
.search { margin-left: 19px; flex: none; }
.task-sep { width: 1px; height: 22px; background-color: #555; margin-left: 16px; flex: none; }
.task-apps { display: flex; margin-left: 15px; height: 100%; }
.app { width: 37px; display: flex; align-items: center; justify-content: center; position: relative; flex: none; }
.app.active { background-color: #4a4a4a; }
.app.on::after { content: ""; position: absolute; left: 4px; right: 4px; bottom: 0; height: 2px; background-color: #b9a0dc; }
.app.active::after { left: 0; right: 0; }
.ps { font: 700 9px "Liberation Sans", sans-serif; fill: #31a8ff; }
.qc { font: 700 8px "Liberation Sans", sans-serif; fill: #fff; }
.cmd { font: 700 6px "Liberation Mono", monospace; fill: #fff; }
.tray { margin-left: auto; display: flex; align-items: center; height: 100%; padding-right: 5px; width: 403px; border-right: 1px solid #555; }
.tray-help { flex: none; }
.help-q { font: 700 15px "Liberation Sans", sans-serif; fill: #fff; text-anchor: middle; }
.sun { width: 19px; height: 19px; border-radius: 50%; background: linear-gradient(160deg, #ffd040, #f59a10); margin-left: 18px; flex: none; }
.weather { color: #b8b8b8; font-size: 13px; flex: none; }
.temp { margin-left: 11px; width: 37px; }
.cond { width: 70px; }
.tray-i { flex: none; }
.chevron { margin-left: 4px; }
.cam { margin-left: 11px; }
.batt { margin-left: 10px; }
.wifi { margin-left: 10px; }
.vol { margin-left: 8px; }
.lang { margin-left: 8px; font-size: 11.5px; width: 30px; flex: none; }
.clock { flex: 1; text-align: center; line-height: 16px; font-size: 12px; }
```
